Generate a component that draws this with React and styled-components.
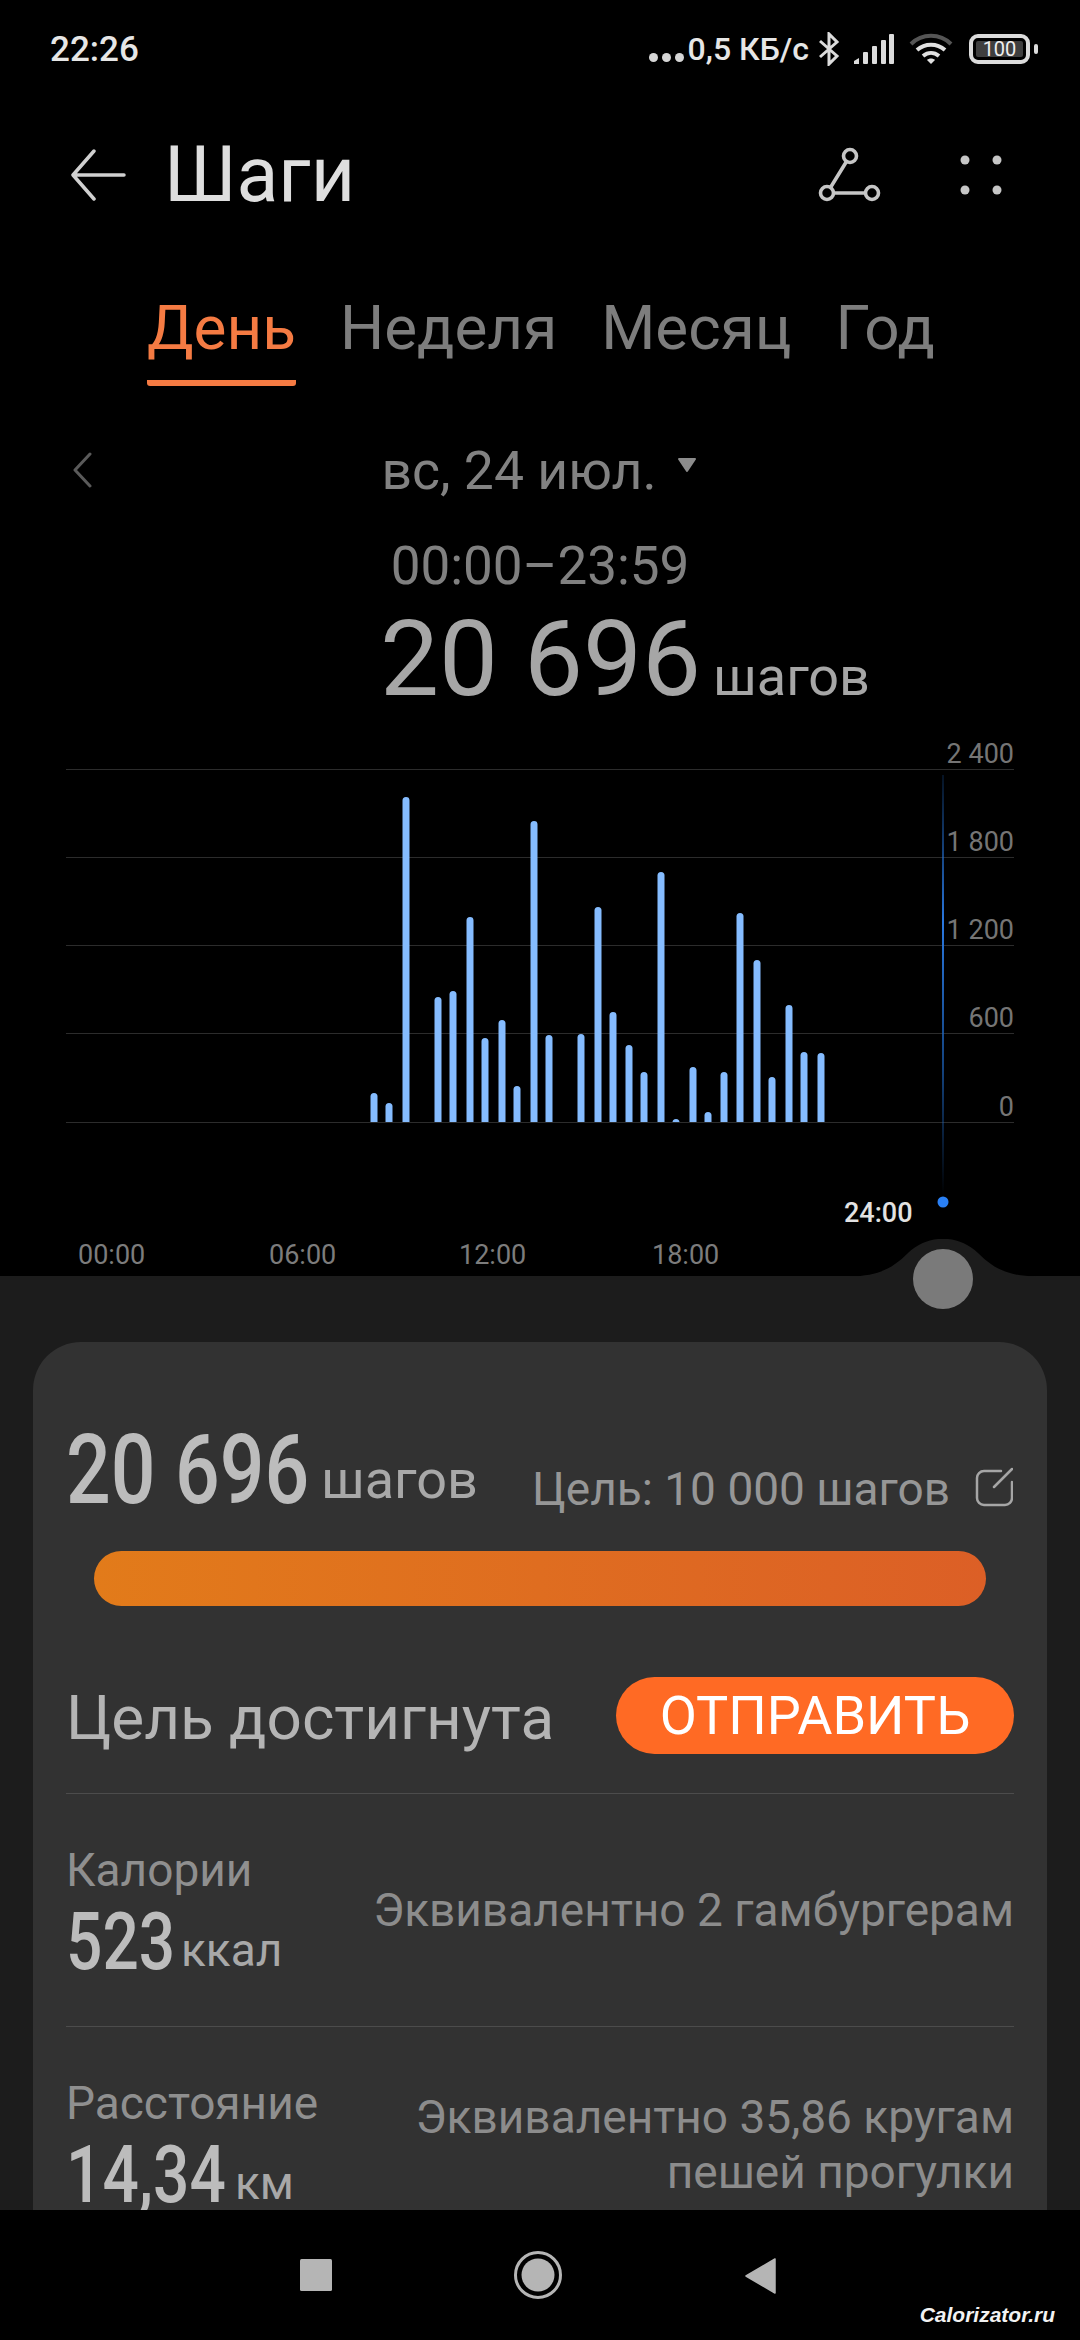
import styled, { createGlobalStyle } from "styled-components";

const GlobalStyle = createGlobalStyle`
  html, body {
    margin: 0;
    padding: 0;
    background: #000;
  }
  * {
    box-sizing: border-box;
  }
`;

const Page = styled.div`
  width: 1080px;
  height: 2340px;
  overflow: hidden;
  background: #000;
  font-family: Roboto, "Noto Sans", sans-serif;
  display: flex;
  flex-direction: column;
`;

const StatusBar = styled.div`
  height: 98px;
  padding: 0 42px 0 50px;
  display: flex;
  align-items: center;
  justify-content: space-between;
  color: #e6e6e6;
  font-weight: 500;
`;

const Clock = styled.div`
  font-size: 35px;
`;

const StatusRight = styled.div`
  display: flex;
  align-items: center;
`;

const Speed = styled.div`
  font-size: 32px;
  margin: 0 9px 0 4px;
  white-space: nowrap;
`;

const Dots = styled.div`
  display: flex;
  gap: 4px;
  margin-top: 16px;
`;

const Dot = styled.span`
  width: 9px;
  height: 9px;
  border-radius: 50%;
  background: #d6d6d6;
`;

const Battery = styled.div`
  position: relative;
  width: 61px;
  height: 30px;
  margin-left: 16px;
  margin-right: 8px;
  border: 4px solid #dcdcdc;
  border-radius: 9px;
  padding: 3px;

  &::after {
    content: "";
    position: absolute;
    right: -12px;
    top: 6px;
    width: 4px;
    height: 10px;
    border-radius: 2px;
    background: #dcdcdc;
  }
`;

const BatteryFill = styled.div`
  height: 100%;
  background: #3f3f3f;
  border-radius: 2px;
  display: flex;
  align-items: center;
  justify-content: center;
  color: #f0f0f0;
  font-size: 20px;
  font-weight: 400;
`;

const Header = styled.div`
  height: 154px;
  padding: 0 78px 0 70px;
  display: flex;
  align-items: center;
`;

const Title = styled.h1`
  margin: 0 0 0 38px;
  flex: 1;
  font-size: 77px;
  font-weight: 400;
  color: #dedede;
`;

const HeaderIcons = styled.div`
  display: flex;
  align-items: center;
  gap: 78px;
`;

const Tabs = styled.div`
  height: 134px;
  padding: 18px 0 0 147px;
  display: flex;
  gap: 44px;
`;

const Tab = styled.div`
  height: 116px;
  font-size: 62px;
  line-height: 116px;
  color: ${(p) => (p.$active ? "#f57b43" : "#7d7d7d")};
  border-bottom: ${(p) => (p.$active ? "6px solid #f57b43" : "none")};
  border-radius: 3px;
`;

const DateRow = styled.div`
  height: 86px;
  margin-top: 41px;
  padding: 0 72px;
  display: grid;
  grid-template-columns: 1fr auto 1fr;
  align-items: center;
`;

const DateLabel = styled.div`
  display: flex;
  align-items: center;
  gap: 20px;
  font-size: 53.5px;
  color: #828282;
  margin-left: -2px;
`;

const DropMark = styled.svg`
  margin-bottom: 10px;
`;

const TimeRange = styled.div`
  text-align: center;
  font-size: 53px;
  line-height: 60px;
  margin-top: 23px;
  color: #808080;
`;

const TotalRow = styled.div`
  height: 130px;
  margin-top: 4px;
  padding-left: 380px;
  display: flex;
  align-items: baseline;
  gap: 12px;
  color: #a6a6a6;
`;

const TotalValue = styled.span`
  font-size: 105px;
  line-height: 120px;
`;

const TotalUnit = styled.span`
  font-size: 54px;
`;

const Chart = styled.svg`
  display: block;
  flex: none;
  font-family: Roboto, sans-serif;
`;

const Sheet = styled.div`
  position: relative;
  height: 934px;
  flex: none;
  background: #1c1c1c;
  padding: 66px 33px 0;
`;

const SliderBump = styled.svg`
  position: absolute;
  left: 850px;
  top: -37px;
`;

const Card = styled.div`
  height: 868px;
  overflow: hidden;
  background: #323232;
  border-radius: 48px 48px 0 0;
  padding: 72px 33px 0;
`;

const SummaryRow = styled.div`
  display: flex;
  align-items: baseline;
  height: 100px;
`;

const BigNumber = styled.span`
  display: inline-block;
  width: ${(p) => p.$width}px;
  font-size: ${(p) => p.$size}px;
  font-weight: 500;
  color: #bcbcbc;
  white-space: nowrap;
  transform: scaleX(${(p) => p.$squeeze});
  transform-origin: left;
`;

const Unit = styled.span`
  font-size: ${(p) => p.$size}px;
  color: #a8a8a8;
  margin-left: ${(p) => p.$gap}px;
  transform: translateY(-${(p) => p.$lift}px);
`;

const Goal = styled.span`
  margin-left: auto;
  font-size: 46px;
  color: #969696;
  transform: translateY(2px);
`;

const EditWrap = styled.span`
  margin: 0 1px 7px 25px;
  align-self: flex-end;
  display: flex;
  height: 40px;
`;

const ProgressTrack = styled.div`
  height: 55px;
  margin: 37px 28px 0 28px;
  border-radius: 28px;
  background: linear-gradient(90deg, #e27b1a, #dc5f26);
`;

const AchievedRow = styled.div`
  margin-top: 71px;
  height: 117px;
  display: flex;
  align-items: flex-start;
  justify-content: space-between;
  border-bottom: 1px solid #4c4c4c;
`;

const AchievedText = styled.div`
  font-size: 62px;
  line-height: 82px;
  color: #b4b4b4;
`;

const SendButton = styled.button`
  width: 398px;
  height: 77px;
  border: none;
  border-radius: 39px;
  background: #ff6a24;
  color: #fff;
  font-family: inherit;
  font-size: 54px;
  padding: 0;
`;

const StatRow = styled.div`
  height: 233px;
  display: flex;
  justify-content: space-between;
  border-bottom: ${(p) => (p.$last ? "none" : "1px solid #4c4c4c")};
  padding-top: 51px;
`;

const StatLeft = styled.div`
  display: flex;
  flex-direction: column;
`;

const StatLabel = styled.div`
  font-size: 46px;
  line-height: 50px;
  color: #8f8f8f;
`;

const StatValue = styled.div`
  display: flex;
  align-items: baseline;
  height: 80px;
`;

const StatNote = styled.div`
  font-size: 46px;
  line-height: 55px;
  text-align: right;
  color: #8c8c8c;
  padding-top: ${(p) => p.$top}px;
`;

const NavBar = styled.div`
  position: relative;
  height: 130px;
  flex: none;
  background: #000;
  padding: 47px 304px 0 300px;
  display: flex;
  justify-content: space-between;
  align-items: flex-start;
`;

const HomeMark = styled.svg`
  margin-top: -6px;
`;

const Watermark = styled.div`
  position: absolute;
  right: 25px;
  bottom: 13px;
  font-family: "Liberation Sans", sans-serif;
  font-size: 21px;
  font-weight: 700;
  font-style: italic;
  color: #f2f2f2;
`;

const SignalMark = styled.svg`
  margin-left: 14px;
`;

const WifiMark = styled.svg`
  margin-left: 15px;
`;

const BARS = [
  [374, 1093], [389, 1103], [406, 797], [438, 997], [453, 991], [470, 917],
  [485, 1038], [502, 1020], [517, 1086], [534, 821], [549, 1035], [581, 1034],
  [598, 907], [613, 1012], [629, 1045], [644, 1072], [661, 872], [676, 1119],
  [693, 1067], [708, 1112], [724, 1072], [740, 913], [757, 960], [772, 1077],
  [789, 1005], [804, 1052], [821, 1053],
];

const GRID = [
  { y: 39, label: "2 400" },
  { y: 127, label: "1 800" },
  { y: 215, label: "1 200" },
  { y: 303, label: "600" },
  { y: 392, label: "0" },
];

const TIMES = [
  { x: 78, label: "00:00" },
  { x: 269, label: "06:00" },
  { x: 459, label: "12:00" },
  { x: 652, label: "18:00" },
];

const CHART_TOP = 730;
const BASELINE = 1122 - CHART_TOP;

const barPath = ([x, top]) => {
  const t = top - CHART_TOP;
  return `M${x - 3.5} ${BASELINE}V${t + 3.5}A3.5 3.5 0 0 1 ${x + 3.5} ${t + 3.5}V${BASELINE}Z`;
};

const StepsChart = () => (
  <Chart width="1080" height="546" viewBox="0 0 1080 546">
    <defs>
      <linearGradient id="cursor" x1="0" y1="0" x2="0" y2="1">
        <stop offset="0" stopColor="#1c5fb4" stopOpacity="0.2" />
        <stop offset="0.35" stopColor="#2a78e0" />
        <stop offset="0.7" stopColor="#1c5fb4" stopOpacity="0.7" />
        <stop offset="1" stopColor="#1c5fb4" stopOpacity="0" />
      </linearGradient>
    </defs>
    {GRID.map((g) => (
      <g key={g.label}>
        <rect x="66" y={g.y} width="948" height="1" fill="#2c2c2c" />
        <text x="1014" y={g.y - 6} textAnchor="end" fontSize="27" fill="#757575">
          {g.label}
        </text>
      </g>
    ))}
    {BARS.map((b) => (
      <path key={b[0]} d={barPath(b)} fill="#85bcff" />
    ))}
    <rect x="942" y="45" width="2" height="420" fill="url(#cursor)" />
    <circle cx="943" cy="472" r="5.5" fill="#2a80f5" />
    <text x="844" y="492" fontSize="27" fontWeight="500" fill="#e2e2e2">
      24:00
    </text>
    {TIMES.map((t) => (
      <text key={t.label} x={t.x} y="534" fontSize="27" fill="#7c7c7c">
        {t.label}
      </text>
    ))}
  </Chart>
);

const BluetoothIcon = () => (
  <svg width="22" height="34" viewBox="0 0 22 34" fill="none" stroke="#dcdcdc" strokeWidth="3">
    <path d="M2 9l17 15-8 8V2l8 8L2 25" />
  </svg>
);

const SignalIcon = () => (
  <SignalMark width="40" height="30" viewBox="0 0 40 30" fill="#dcdcdc">
    <path d="M0 30v-3l5-3v6z" />
    <rect x="9" y="18" width="5" height="12" rx="1" />
    <rect x="18" y="12" width="5" height="18" rx="1" />
    <rect x="27" y="6" width="5" height="24" rx="1" />
    <rect x="35" y="0" width="5" height="30" rx="1" />
  </SignalMark>
);

const WifiIcon = () => (
  <WifiMark width="44" height="32" viewBox="0 0 44 32" fill="none" strokeWidth="4">
    <path d="M2 11C13 0 31 0 42 11" stroke="#555" />
    <path d="M8 17c8-7 20-7 28 0" stroke="#e0e0e0" />
    <path d="M14 23c5-4 11-4 16 0" stroke="#e0e0e0" />
    <path d="M18 27c2-2 6-2 8 0l-4 4z" fill="#e0e0e0" stroke="none" />
  </WifiMark>
);

const BackIcon = () => (
  <svg width="56" height="52" viewBox="0 0 56 52" fill="none" stroke="#d0d0d0" strokeWidth="3.5" strokeLinecap="round" strokeLinejoin="round">
    <path d="M54 26H3M24 2L3 26l21 24" />
  </svg>
);

const RouteIcon = () => (
  <svg width="64" height="56" viewBox="0 0 64 56" fill="none" stroke="#c6c6c6" strokeWidth="3.6">
    <circle cx="32" cy="9" r="6.5" />
    <circle cx="9" cy="46" r="6.5" />
    <circle cx="54" cy="46" r="6.5" />
    <path d="M28.5 14.5L12.5 40.5M15.5 46h32" />
  </svg>
);

const MoreIcon = () => (
  <svg width="42" height="40" viewBox="0 0 42 40" fill="#c6c6c6">
    <circle cx="5" cy="5" r="4.5" />
    <circle cx="37" cy="5" r="4.5" />
    <circle cx="5" cy="35" r="4.5" />
    <circle cx="37" cy="35" r="4.5" />
  </svg>
);

const PrevIcon = () => (
  <svg width="20" height="36" viewBox="0 0 20 36" fill="none" stroke="#5a5a5a" strokeWidth="3" strokeLinecap="round" strokeLinejoin="round">
    <path d="M18 2L3 18l15 16" />
  </svg>
);

const DropIcon = () => (
  <DropMark width="20" height="16" viewBox="0 0 20 16" fill="#8c8c8c" stroke="#8c8c8c" strokeWidth="2" strokeLinejoin="round">
    <path d="M2 2h16l-8 12z" />
  </DropMark>
);

const EditIcon = () => (
  <svg width="38" height="40" viewBox="0 0 38 40" fill="none" stroke="#a6a6a6" strokeWidth="2.5" strokeLinecap="round">
    <path d="M26 4H9a7 7 0 0 0-7 7v20a7 7 0 0 0 7 7h21a7 7 0 0 0 7-7V15" />
    <path d="M37 2L19 20" />
  </svg>
);

const SliderShape = () => (
  <SliderBump width="186" height="100" viewBox="0 0 186 100">
    <path d="M0 37.5C30 37 44 28 58 14C78-5 108-5 128 14C142 28 156 37 186 37.5V38H0Z" fill="#1c1c1c" />
    <circle cx="93" cy="40" r="30" fill="#7a7a7a" />
  </SliderBump>
);

const App = () => (
  <Page>
    <GlobalStyle />
    <StatusBar>
      <Clock>22:26</Clock>
      <StatusRight>
        <Dots>
          <Dot />
          <Dot />
          <Dot />
        </Dots>
        <Speed>0,5 КБ/с</Speed>
        <BluetoothIcon />
        <SignalIcon />
        <WifiIcon />
        <Battery>
          <BatteryFill>100</BatteryFill>
        </Battery>
      </StatusRight>
    </StatusBar>

    <Header>
      <BackIcon />
      <Title>Шаги</Title>
      <HeaderIcons>
        <RouteIcon />
        <MoreIcon />
      </HeaderIcons>
    </Header>

    <Tabs>
      <Tab $active>День</Tab>
      <Tab>Неделя</Tab>
      <Tab>Месяц</Tab>
      <Tab>Год</Tab>
    </Tabs>

    <DateRow>
      <PrevIcon />
      <DateLabel>
        вс, 24 июл.
        <DropIcon />
      </DateLabel>
    </DateRow>
    <TimeRange>00:00–23:59</TimeRange>
    <TotalRow>
      <TotalValue>20 696</TotalValue>
      <TotalUnit>шагов</TotalUnit>
    </TotalRow>

    <StepsChart />

    <Sheet>
      <SliderShape />
      <Card>
        <SummaryRow>
          <BigNumber $size={96} $width={242} $squeeze={0.82}>
            20 696
          </BigNumber>
          <Unit $size={54} $gap={13} $lift={5}>
            шагов
          </Unit>
          <Goal>Цель: 10 000 шагов</Goal>
          <EditWrap>
            <EditIcon />
          </EditWrap>
        </SummaryRow>
        <ProgressTrack />
        <AchievedRow>
          <AchievedText>Цель достигнута</AchievedText>
          <SendButton>ОТПРАВИТЬ</SendButton>
        </AchievedRow>
        <StatRow>
          <StatLeft>
            <StatLabel>Калории</StatLabel>
            <StatValue>
              <BigNumber $size={80} $width={109} $squeeze={0.8}>
                523
              </BigNumber>
              <Unit $size={46} $gap={6} $lift={3}>
                ккал
              </Unit>
            </StatValue>
          </StatLeft>
          <StatNote $top={38}>Эквивалентно 2 гамбургерам</StatNote>
        </StatRow>
        <StatRow $last>
          <StatLeft>
            <StatLabel>Расстояние</StatLabel>
            <StatValue>
              <BigNumber $size={80} $width={163} $squeeze={0.8}>
                14,34
              </BigNumber>
              <Unit $size={46} $gap={6} $lift={3}>
                км
              </Unit>
            </StatValue>
          </StatLeft>
          <StatNote $top={12}>
            Эквивалентно 35,86 кругам
            <br />
            пешей прогулки
          </StatNote>
        </StatRow>
      </Card>
    </Sheet>

    <NavBar>
      <svg width="32" height="36" viewBox="0 0 32 36" fill="#b5b5b5">
        <rect y="2" width="32" height="32" rx="1.5" />
      </svg>
      <HomeMark width="48" height="48" viewBox="0 0 48 48">
        <circle cx="24" cy="24" r="22.5" fill="none" stroke="#b5b5b5" strokeWidth="3" />
        <circle cx="24" cy="24" r="16.5" fill="#b5b5b5" />
      </HomeMark>
      <svg width="32" height="38" viewBox="0 0 32 38" fill="#b5b5b5" stroke="#b5b5b5" strokeWidth="1.5" strokeLinejoin="round">
        <path d="M31 2v34L2 19z" />
      </svg>
      <Watermark>Calorizator.ru</Watermark>
    </NavBar>
  </Page>
);

export default App;
